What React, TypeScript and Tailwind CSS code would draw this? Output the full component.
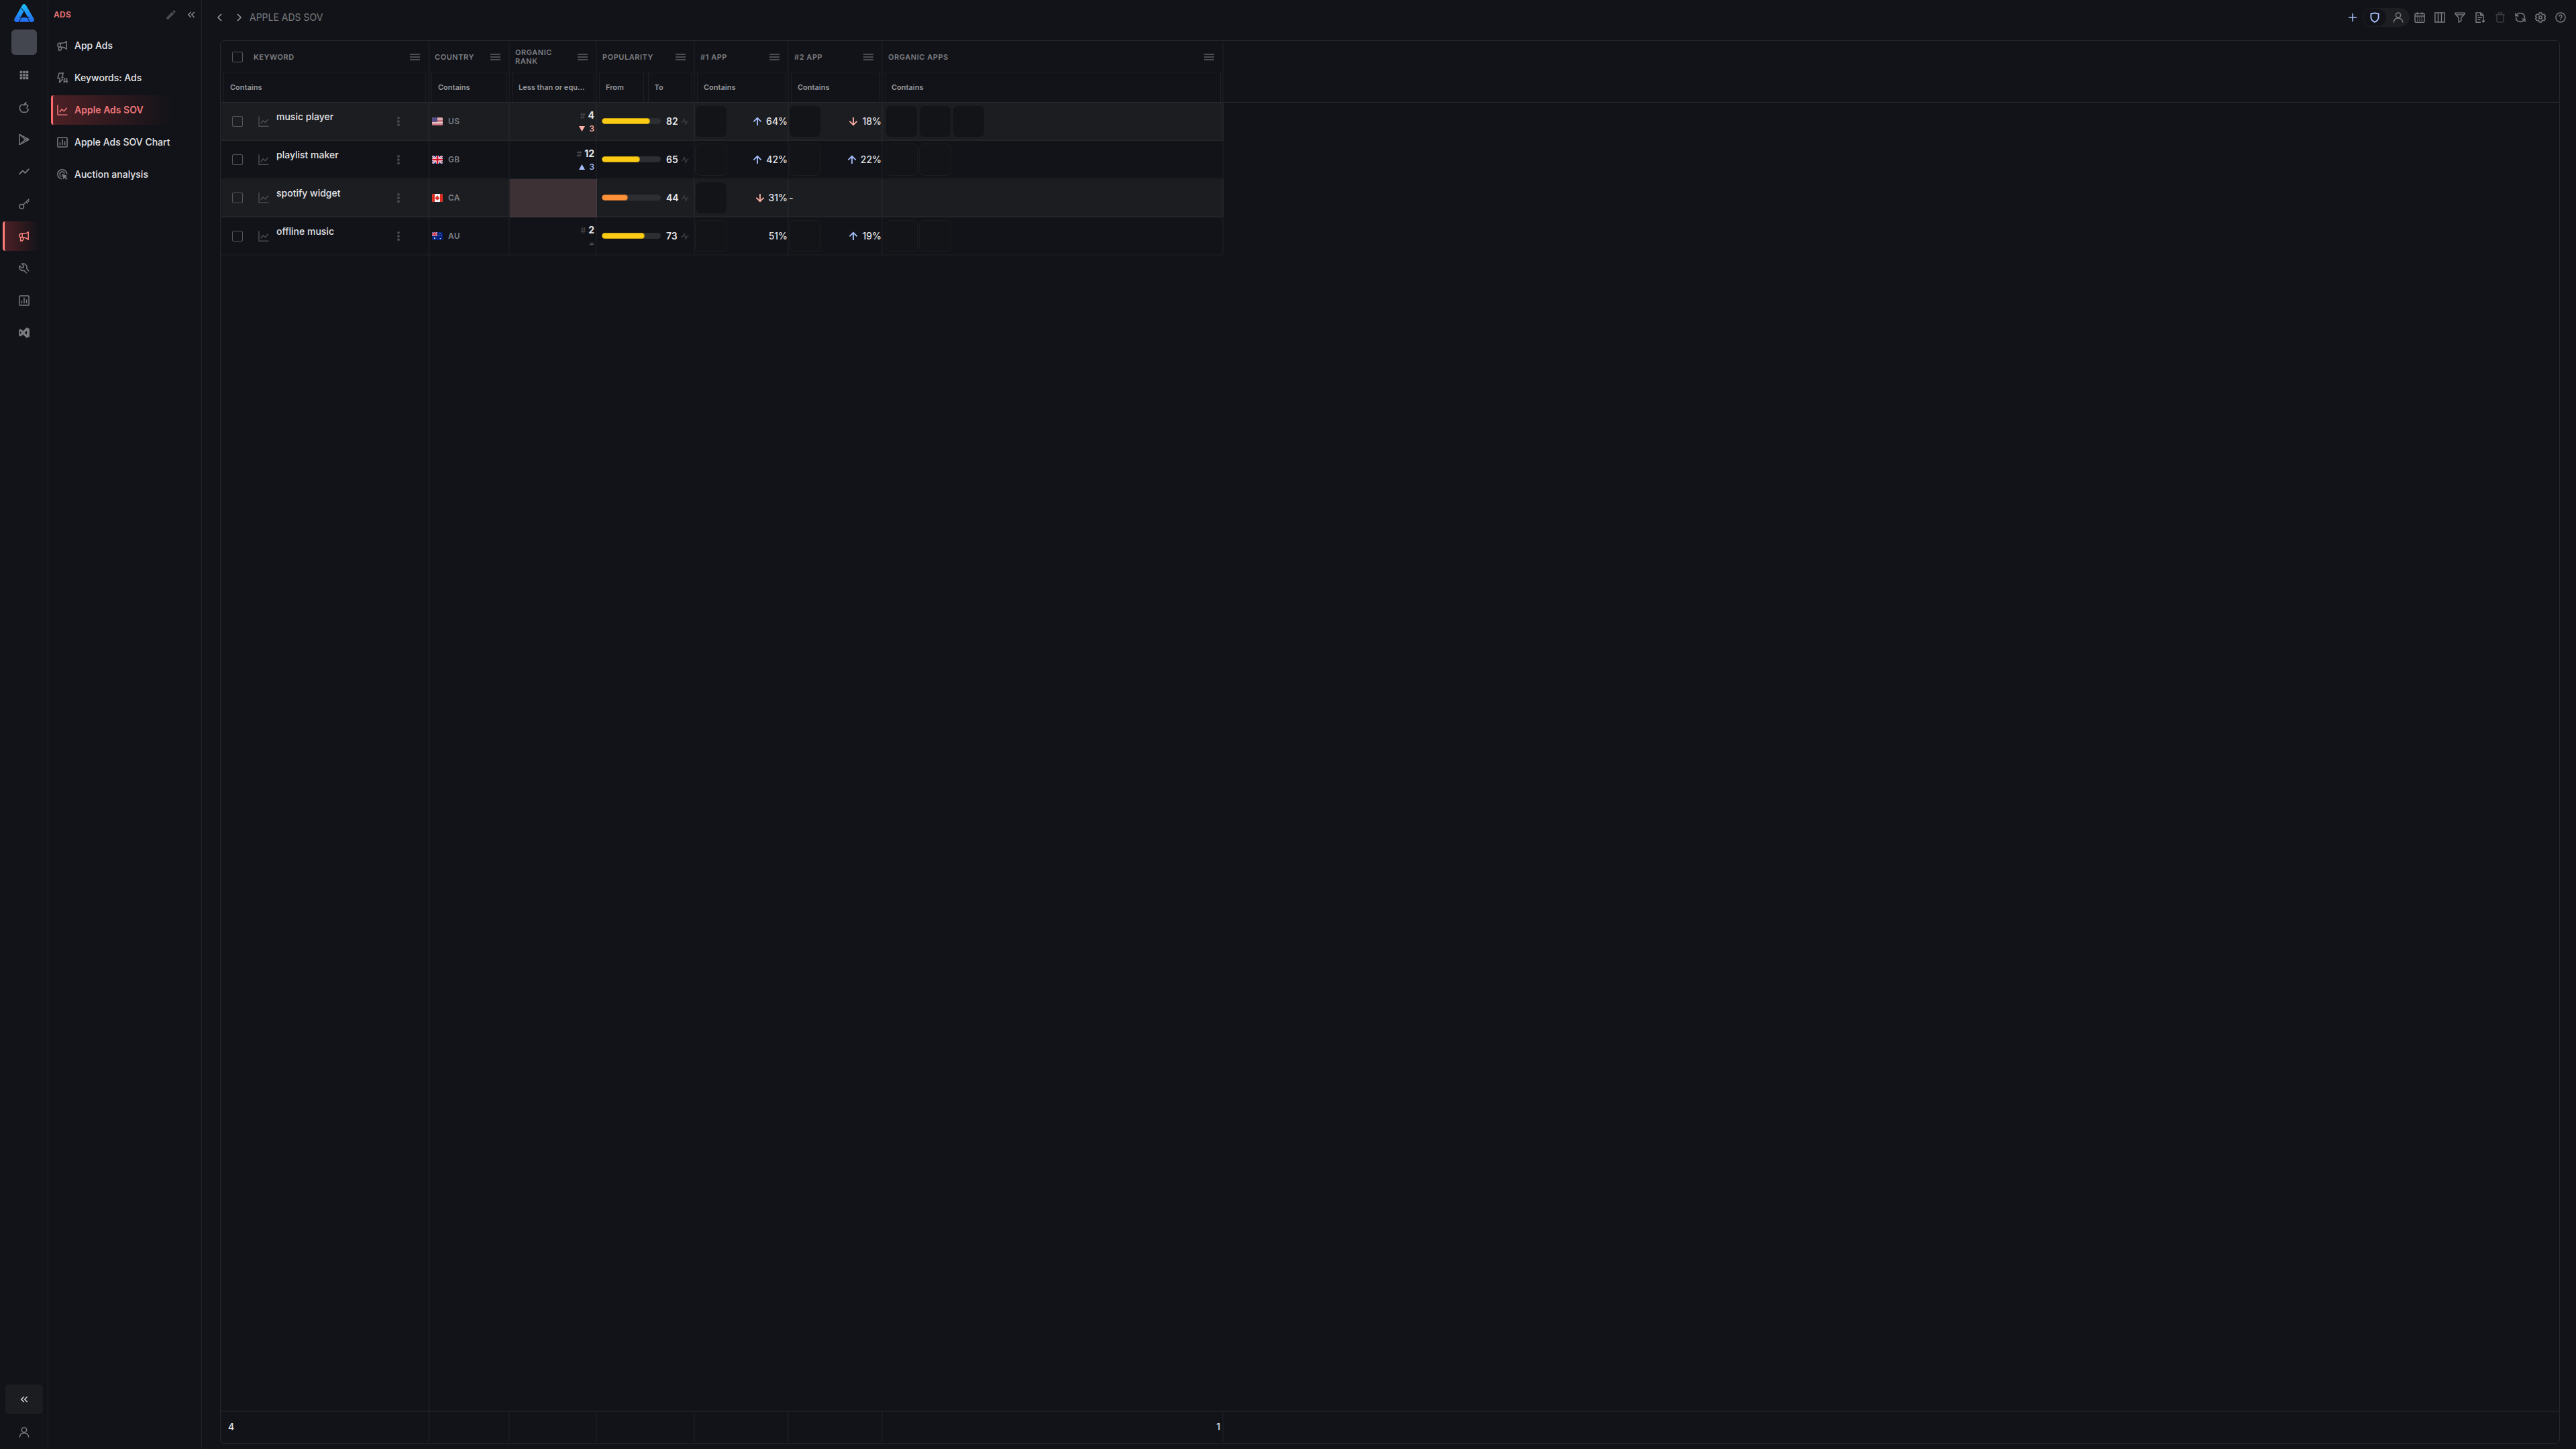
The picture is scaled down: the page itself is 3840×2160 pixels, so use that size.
import type { ReactNode, SVGProps } from "react";
import { MdKeyboardDoubleArrowLeft, MdEdit } from "react-icons/md";

type IconProps = SVGProps<SVGSVGElement>;

function Icon({ children, className = "size-4", ...rest }: IconProps) {
  return (
    <svg
      viewBox="0 0 16 16"
      fill="none"
      stroke="currentColor"
      strokeWidth="1.5"
      strokeLinejoin="round"
      aria-hidden="true"
      className={`shrink-0 ${className}`}
      {...rest}
    >
      {children}
    </svg>
  );
}

const Squares = () => (
  <Icon stroke="none" fill="currentColor">
    <path d="M1.700 1.700h3.600v3.600H1.700zM6.200 1.700h3.600v3.600H6.200zM10.700 1.700h3.600v3.600h-3.600zM1.700 6.200h3.600v3.600H1.700zM6.200 6.200h3.600v3.600H6.200zM10.700 6.200h3.600v3.600h-3.600zM1.700 10.700h3.600v3.600H1.700zM6.200 10.700h3.600v3.600H6.200zM10.700 10.700h3.600v3.600h-3.600z" />
  </Icon>
);

const Megaphone = () => (
  <Icon>
    <path d="M4 4.300h4c2.600 0 4.700-1.200 6.200-2.600v11.600C12.700 11.900 10.600 10.300 8 10.300H4a3 3 0 0 1 0-6z" />
    <path d="M5.200 4.500v5.600M2.600 10v5h2.600l1.200-1.600 1-3" />
  </Icon>
);

const BoltA = () => (
  <Icon>
    <path d="M9.600 7.400H7.200L9.400 1H3.200L1 8.600h3.400L3.600 15l5-5.600" />
    <path d="M10.500 15.800v-4.300a2.200 2.200 0 0 1 4.400 0v4.300M10.500 13.200h4.400" />
  </Icon>
);

const ChartAxes = () => (
  <Icon>
    <path d="M1 0.500v14.700h14.500M3.800 11.200l3.400-4.400 3.200 3 4.300-5" />
  </Icon>
);

const ChartBox = () => (
  <Icon>
    <rect x="0.900" y="0.900" width="14.200" height="14.200" rx="1.200" />
    <path d="M4.400 8.200v4M8 3.800v8.400M11.600 6.600v5.600" />
  </Icon>
);

const TargetCursor = () => (
  <Icon>
    <path d="M7.500 14.800A7 7 0 1 1 14.800 7.500" />
    <path d="M6.600 11.400A3.800 3.800 0 1 1 11.400 6.600" />
    <path d="M7 7l8.800 3.200-3.200 1.400 2.900 3-1.300 1.200-2.900-3L10 16z" fill="currentColor" stroke="none" />
  </Icon>
);

const Apple = () => (
  <Icon>
    <path d="M8 4.800C6.800 4 5.600 3.900 4.400 4.200 2.400 4.700 1.500 6.500 1.500 8.800c0 3.200 1.700 6.400 4 6.400h5.200c1.600 0 2.900-1.600 3.600-3.600-1.500-.7-2.200-1.800-2.200-3.100 0-1.200.6-2.100 1.700-2.900-.9-1.200-2.200-1.600-3.400-1.500C9.400 4.200 8.700 4.500 8 4.800z" />
    <path d="M8 4.600C7.800 2.400 9 .8 11.200.4c0 2-1 3.400-3.200 4.200z" fill="currentColor" strokeWidth="0.800" />
  </Icon>
);

const Play = () => (
  <Icon>
    <path d="M1 .3v15.400L15.200 8z" />
    <path d="M1.400.6l10.200 9.200M1.400 15.400l10.200-9.200M15 8l-4-.2" strokeWidth="1.200" />
  </Icon>
);

const Trend = () => (
  <Icon strokeWidth="1.800">
    <path d="M.7 11.800l5-5.400 3.700 3.400 5.900-6" />
  </Icon>
);

const Key = () => (
  <Icon>
    <circle cx="4.300" cy="11.700" r="3.300" />
    <path d="M6.700 9.300L15.300.7M11 5l2.400 2.400M13.400 2.800l1.900 1.900" />
  </Icon>
);

const Wrench = () => (
  <Icon>
    <path d="M15.300 12.200l-3.500-3.400c.8-2.600.1-5-1.800-6.500C8.400 1 6.400.7 4.500 1.300l3 3-.5 2.400-2.600.6-3-3C.6 6.300 1 8.400 2.400 9.900c1.600 1.600 3.700 2 5.800 1.500l3.600 3.800" />
  </Icon>
);

const Studio = () => (
  <Icon stroke="none" fill="currentColor">
    <path
      fillRule="evenodd"
      d="M11.500.2L16 2v12l-4.500 1.800-5-5.100-3.700 2.900L.2 12.500v-9l2.600-1.100 3.700 2.900zM12 5.300L8.700 8l3.300 2.700zM2 6v4l2.100-2z"
    />
  </Icon>
);

const Person = () => (
  <Icon>
    <circle cx="8" cy="4.600" r="3.700" />
    <path d="M1 15.600C1.700 11.200 4.300 8.900 8 8.900s6.300 2.300 7 6.700" />
  </Icon>
);

const ChevronLeft = () => (
  <Icon strokeLinejoin="miter">
    <path d="M10 3L5 8l5 5" />
  </Icon>
);

const ChevronRight = () => (
  <Icon strokeLinejoin="miter">
    <path d="M6 3l5 5-5 5" />
  </Icon>
);

const Plus = () => (
  <Icon>
    <path d="M8 2v12M2 8h12" />
  </Icon>
);

const Shield = () => (
  <Icon strokeWidth="1.800">
    <path d="M8 1.200c-1.600.9-3.600 1.200-5.600 1.200v5.800c0 2.900 2.200 5 5.600 6.700 3.400-1.700 5.600-3.800 5.600-6.700V2.400c-2 0-4-.3-5.600-1.200z" />
  </Icon>
);

const Calendar = () => (
  <Icon>
    <rect x="1" y="2.200" width="14" height="13" rx="1.200" />
    <path d="M1 6h14M4.500.2v3.600M11.500.2v3.600" />
    <path d="M4 8.800h1.600M7.200 8.800h1.600M10.400 8.800H12M4 12h1.600M7.200 12h1.600M10.400 12H12" />
  </Icon>
);

const Columns = () => (
  <Icon>
    <path d="M.9 1h14.200v14H.9zM5.500 1v14M10.500 1v14" />
  </Icon>
);

const Funnel = () => (
  <Icon>
    <path d="M1 1.200h14v1.600L9.800 8.400V13l-3.600 2.200V8.400L1 2.800zM2.500 4h11" />
  </Icon>
);

const FileDown = () => (
  <Icon>
    <path d="M9 15.200H2V.9h6.800L13 5v4.400M8.800.9V5H13" />
    <path d="M4.500 5.200h2M4.500 8.200h6M4.500 11.200h4" />
    <path d="M13 9.600V15M10.800 12.800L13 15l2.200-2.200" />
  </Icon>
);

const Trash = () => (
  <Icon>
    <path d="M1.200 3.800h13.600M3 3.800V13a2 2 0 0 0 2 2h6a2 2 0 0 0 2-2V3.800M5.500 3.600V1h5v2.600" />
  </Icon>
);

const Refresh = () => (
  <Icon>
    <path d="M2 5.600A6.500 6.500 0 0 1 14.500 8v1M14 10.400A6.500 6.500 0 0 1 1.500 8" />
    <path d="M1 1.200v4.600h4.600M15 14.800v-4.600h-4.600" />
  </Icon>
);

const Gear = () => (
  <Icon>
    <path d="M6.300 1h3.400l.5 2 1.600.9 2-.6 1.600 2.900L13.900 7.600v.8l1.500 1.400-1.600 2.900-2-.6-1.600.9-.5 2H6.300l-.5-2-1.600-.9-2 .6L.6 9.800l1.500-1.400v-.8L.6 6.200l1.600-2.900 2 .6L5.800 3z" />
    <circle cx="8" cy="8" r="2.200" />
  </Icon>
);

const Help = () => (
  <Icon>
    <circle cx="8" cy="8" r="7" />
    <path d="M6 6.600A2 2 0 1 1 8.800 8.200C8.200 8.500 8 8.800 8 9.400M8 10.600v1.500" />
  </Icon>
);

const Pulse = () => (
  <Icon className="size-3" strokeWidth="1.800">
    <path d="M.5 9H4l2.600-6 3.200 11 2.400-6.200h3.300" />
  </Icon>
);

const Menu = () => (
  <svg viewBox="0 0 15 10" fill="currentColor" aria-hidden="true" className="h-2.5 w-[15px]">
    <path d="M0 0h15v2H0zM0 4h15v2H0zM0 8h15v2H0z" />
  </svg>
);

const Dots = () => (
  <svg viewBox="0 0 16 16" fill="currentColor" aria-hidden="true" className="size-4">
    <circle cx="8" cy="2.800" r="1.900" />
    <circle cx="8" cy="8" r="1.900" />
    <circle cx="8" cy="13.200" r="1.900" />
  </svg>
);

const Arrow = ({ up }: { up: boolean }) => (
  <svg
    viewBox="0 0 14 14"
    fill="none"
    stroke="currentColor"
    strokeWidth="1.800"
    aria-hidden="true"
    className={up ? "size-3.5 text-[#a8c1ff]" : "size-3.5 rotate-180 text-[#ffb0a6]"}
  >
    <path d="M7 13V2M1.400 7.400L7 1.800l5.600 5.600" />
  </svg>
);

const Logo = () => (
  <svg viewBox="0 0 30 27" role="img" aria-label="Home" className="h-[27px] w-[30px]">
    <defs>
      <linearGradient id="logo" x1="0" y1="0" x2="0" y2="27" gradientUnits="userSpaceOnUse">
        <stop offset="0" stopColor="#1cc0fb" />
        <stop offset="1" stopColor="#2468f2" />
      </linearGradient>
    </defs>
    <path d="M3.600 23.500L15 3.600l11.400 19.900" fill="none" stroke="url(#logo)" strokeWidth="6.800" strokeLinecap="round" strokeLinejoin="round" />
    <path d="M6 19.800h18l2 7H4z" fill="url(#logo)" />
    <path d="M7 27l4.500-7.200M18.500 19.800h4.500M19.500 19.800L23.500 27M7.500 19.700h14M11 6l3 5" stroke="#121318" strokeWidth="1" fill="none" />
    <path d="M15 11l4.600 8.200h-9.200z" fill="#121318" />
  </svg>
);

const UnionJack = () => (
  <>
    <path d="M0 0h24v18H0z" fill="#0b2a80" />
    <path d="M0 0l24 18M24 0L0 18" stroke="#fff" strokeWidth="4" />
    <path d="M0 0l24 18M24 0L0 18" stroke="#d0142c" strokeWidth="1.400" />
    <path d="M12 0v18M0 9h24" stroke="#fff" strokeWidth="6.400" />
    <path d="M12 0v18M0 9h24" stroke="#d0142c" strokeWidth="4" />
  </>
);

const flags: Record<string, ReactNode> = {
  US: (
    <>
      <path d="M0 0h24v18H0z" fill="#f2eef0" />
      <path d="M0 1.300h24M0 4.100h24M0 6.900h24M0 9.700h24M0 12.500h24M0 15.300h24M0 17.500h24" stroke="#b8434e" strokeWidth="1.400" />
      <path d="M0 0h12v9.700H0z" fill="#45437c" />
      <path d="M1 2h11M1 4.500h11M1 7h11" stroke="#8d8cb4" strokeWidth="0.900" strokeDasharray="1 1.400" />
    </>
  ),
  GB: <UnionJack />,
  CA: (
    <>
      <path d="M0 0h24v18H0z" fill="#f4f2f3" />
      <path d="M0 0h6v18H0zM18 0h6v18h-6z" fill="#d92b20" />
      <path d="M12 3.500l1.300 2.300 1.200-.5-.4 3 2.400-1-.2 1.700.9.700-3.300 2.600.2 1.200-1.900-.3V15h-.6v-1.800l-1.900.3.200-1.200-3.300-2.600.9-.7-.2-1.700 2.400 1-.4-3 1.200.5z" fill="#d92b20" />
    </>
  ),
  AU: (
    <>
      <path d="M0 0h24v18H0z" fill="#04247c" />
      <svg width="12" height="9" viewBox="0 0 24 18">
        <UnionJack />
      </svg>
      <g fill="#fff">
        <circle cx="6" cy="13.500" r="1.500" />
        <circle cx="18" cy="3.200" r="0.800" />
        <circle cx="21.500" cy="7" r="0.800" />
        <circle cx="15.500" cy="8" r="0.800" />
        <circle cx="18.500" cy="14.500" r="1" />
      </g>
    </>
  ),
};

const railItems: { label: string; icon: ReactNode; active?: boolean }[] = [
  { label: "Apps", icon: <Squares /> },
  { label: "App Store", icon: <Apple /> },
  { label: "Google Play", icon: <Play /> },
  { label: "Trends", icon: <Trend /> },
  { label: "Keywords", icon: <Key /> },
  { label: "Ads", icon: <Megaphone />, active: true },
  { label: "Tools", icon: <Wrench /> },
  { label: "Reports", icon: <ChartBox /> },
  { label: "Studio", icon: <Studio /> },
];

const menuItems: { label: string; icon: ReactNode; active?: boolean }[] = [
  { label: "App Ads", icon: <Megaphone /> },
  { label: "Keywords: Ads", icon: <BoltA /> },
  { label: "Apple Ads SOV", icon: <ChartAxes />, active: true },
  { label: "Apple Ads SOV Chart", icon: <ChartBox /> },
  { label: "Auction analysis", icon: <TargetCursor /> },
];

const columns: { label: string; filters: string[] }[] = [
  { label: "Country", filters: ["Contains"] },
  { label: "Organic Rank", filters: ["Less than or equal to"] },
  { label: "Popularity", filters: ["From", "To"] },
  { label: "#1 App", filters: ["Contains"] },
  { label: "#2 App", filters: ["Contains"] },
  { label: "Organic Apps", filters: ["Contains"] },
];

type Share = { value: number; trend?: "up" | "down" };

const rows: {
  keyword: string;
  country: string;
  rank?: number;
  delta?: number;
  popularity: number;
  first?: Share;
  second?: Share;
  organic: number;
}[] = [
  { keyword: "music player", country: "US", rank: 4, delta: -3, popularity: 82, first: { value: 64, trend: "up" }, second: { value: 18, trend: "down" }, organic: 3 },
  { keyword: "playlist maker", country: "GB", rank: 12, delta: 3, popularity: 65, first: { value: 42, trend: "up" }, second: { value: 22, trend: "up" }, organic: 2 },
  { keyword: "spotify widget", country: "CA", popularity: 44, first: { value: 31, trend: "down" }, organic: 0 },
  { keyword: "offline music", country: "AU", rank: 2, delta: 0, popularity: 73, first: { value: 51 }, second: { value: 19, trend: "up" }, organic: 2 },
];

const tools: { label: string; icon: ReactNode; disabled?: boolean }[] = [
  { label: "Calendar", icon: <Calendar /> },
  { label: "Columns", icon: <Columns /> },
  { label: "Filter", icon: <Funnel /> },
  { label: "Export", icon: <FileDown /> },
  { label: "Delete", icon: <Trash />, disabled: true },
  { label: "Refresh", icon: <Refresh /> },
  { label: "Settings", icon: <Gear /> },
  { label: "Help", icon: <Help /> },
];

const Cols = () => (
  <colgroup>
    <col className="w-[310px]" />
    <col className="w-[120px]" />
    <col className="w-[130px]" />
    <col className="w-[146px]" />
    <col className="w-[140px]" />
    <col className="w-[140px]" />
    <col className="w-[508px]" />
    <col />
  </colgroup>
);

const Check = ({ label }: { label: string }) => (
  <input
    type="checkbox"
    aria-label={label}
    className="block size-4 shrink-0 appearance-none rounded-xs border border-[#55565a] bg-transparent"
  />
);

const Tile = () => <div className="size-12 shrink-0 rounded-lg border border-white/4 bg-[#131417]" />;

const Filter = ({ placeholder, label }: { placeholder: string; label: string }) => (
  <input
    type="text"
    aria-label={label}
    placeholder={placeholder}
    className="block h-11 w-full min-w-0 border-x border-white/5 bg-transparent pr-3 pl-[9px] text-[11px] font-semibold text-ellipsis outline-none placeholder:text-[#97989c]"
  />
);

const ShareCell = ({ share }: { share?: Share }) => (
  <td className="border-r-2 border-b-2 border-white/3 p-0">
    {share ? (
      <div className="flex items-center">
        <Tile />
        <div className="ml-auto flex items-center gap-1.5">
          {share.trend && <Arrow up={share.trend === "up"} />}
          <span>{share.value}%</span>
        </div>
      </div>
    ) : (
      "-"
    )}
  </td>
);

const Delta = ({ value }: { value: number }) => {
  if (value === 0) return <div className="text-xs leading-5 text-[#55565a]">=</div>;
  const up = value > 0;
  return (
    <div className={`flex items-center justify-end gap-1.5 text-xs leading-5 ${up ? "text-[#a8c1ff]" : "text-[#ffb0a6]"}`}>
      <svg viewBox="0 0 9 8" fill="currentColor" aria-hidden="true" className={up ? "h-2 w-[9px]" : "h-2 w-[9px] rotate-180"}>
        <path d="M4.500 0L9 8H0z" />
      </svg>
      <span>{Math.abs(value)}</span>
    </div>
  );
};

export default function App() {
  return (
    <div className="flex h-screen bg-[#121318] font-[Inter,sans-serif] text-sm font-medium text-[#e3e3e6]">
      <nav aria-label="Main" className="flex w-[72px] shrink-0 flex-col items-center border-r border-[#222327] text-[#7a7b7f]">
        <a href="#home" className="mt-1.5">
          <Logo />
        </a>
        <button aria-label="Account" className="mt-[11px] size-[38px] rounded-md bg-[#44464f]" />
        <div className="mt-2 flex w-full flex-col gap-1">
          {railItems.map((item) => (
            <a
              key={item.label}
              href={`#${item.label}`}
              aria-label={item.label}
              className={
                item.active
                  ? "ml-1 flex h-11 items-center justify-center rounded-sm border-l-3 border-[#ff7f7b] bg-linear-to-r from-[#4c2025] to-transparent to-80% pr-[7px] text-[#ff8580]"
                  : "flex h-11 items-center justify-center"
              }
            >
              {item.icon}
            </a>
          ))}
        </div>
        <button aria-label="Collapse" className="mt-auto flex h-11 w-14 items-center justify-center rounded-md bg-[#1c1d20] text-[#d5d6d9]">
          <MdKeyboardDoubleArrowLeft className="size-[18px]" />
        </button>
        <button aria-label="Profile" className="mt-[5px] mb-[3px] flex h-11 w-14 items-center justify-center">
          <Person />
        </button>
      </nav>

      <aside className="w-[229px] shrink-0 border-r border-[#222327]">
        <header className="flex h-11 items-center pl-2">
          <h2 className="text-xs font-semibold tracking-wide text-[#f2777a]">ADS</h2>
          <button aria-label="Edit" className="ml-auto flex size-[30px] items-center justify-center text-[#4b4c50]">
            <MdEdit className="size-[18px]" />
          </button>
          <button aria-label="Hide menu" className="flex size-[30px] items-center justify-center text-[#8a8b8f]">
            <MdKeyboardDoubleArrowLeft className="size-[18px]" />
          </button>
        </header>
        <ul className="mt-0.5 flex flex-col gap-1 pl-1">
          {menuItems.map((item) => (
            <li key={item.label}>
              <a
                href={`#${item.label}`}
                className={
                  item.active
                    ? "flex h-11 items-center gap-2.5 rounded-sm border-l-3 border-[#ff6b6f] bg-linear-to-r from-[#4c2025] to-transparent to-80% pl-1.5 font-semibold text-[#f2777a]"
                    : "flex h-11 items-center gap-2.5 pl-[9px]"
                }
              >
                <span className={item.active ? "" : "text-[#7a7b7f]"}>{item.icon}</span>
                {item.label}
              </a>
            </li>
          ))}
        </ul>
      </aside>

      <main className="flex min-w-0 flex-1 flex-col pr-6 pb-2 pl-[27px]">
        <header className="flex h-[60px] shrink-0 items-start pt-3 text-[#7a7b7f]">
          <div className="-ml-2 flex h-7 items-center">
            <button aria-label="Back" className="mr-3 text-[#9c9da0]">
              <ChevronLeft />
            </button>
            <span className="mr-2 text-[#9c9da0]">
              <ChevronRight />
            </span>
            <h1 className="font-normal">APPLE ADS SOV</h1>
          </div>
          <div className="-mr-4 ml-auto flex h-7 items-center">
            <button aria-label="Add" className="flex size-[30px] items-center justify-center text-[#a8c1ff]">
              <Plus />
            </button>
            <div className="flex h-7 w-[70px] rounded-full bg-[#1d1e21]">
              <button aria-label="Protected" className="flex w-9 items-center justify-center rounded-full border border-[#1d1e21] bg-[#121318] text-[#a8c1ff]">
                <Shield />
              </button>
              <button aria-label="User" className="flex flex-1 items-center justify-center">
                <Person />
              </button>
            </div>
            {tools.map((tool) => (
              <button
                key={tool.label}
                aria-label={tool.label}
                disabled={tool.disabled}
                className="flex size-[30px] items-center justify-center disabled:text-[#3b3c40]"
              >
                {tool.icon}
              </button>
            ))}
          </div>
        </header>

        <section className="flex min-h-0 flex-1 flex-col rounded-md border border-[#25272b] p-px">
          <table className="w-full table-fixed border-separate border-spacing-0 text-left">
            <Cols />
            <thead className="text-[#7e7f83]">
              <tr className="h-[46px] text-[11px] leading-[13px] uppercase">
                <th className="border-r border-b border-r-[#2a2b2f] border-b-white/3 p-0 pt-px pr-[13px] pl-4 font-semibold tracking-wider">
                  <div className="flex items-center gap-4">
                    <Check label="Select all" />
                    Keyword
                    <button aria-label="Keyword menu" className="ml-auto text-[#4b4c50]">
                      <Menu />
                    </button>
                  </div>
                </th>
                {columns.map((c) => (
                  <th key={c.label} className="border-r-2 border-b border-white/3 p-0 pt-px pr-3 pl-2 font-semibold tracking-wider">
                    <div className="flex items-center justify-between gap-2">
                      {c.label}
                      <button aria-label={`${c.label} menu`} className="text-[#4b4c50]">
                        <Menu />
                      </button>
                    </div>
                  </th>
                ))}
                <td />
              </tr>
              <tr className="h-[45px] [&>td]:border-b [&>td]:border-b-[#2a2b2f]">
                <td className="border-r border-[#2a2b2f] p-0 pr-1 pl-[3px]">
                  <Filter placeholder="Contains" label="Keyword contains" />
                </td>
                {columns.map((c) => (
                  <td key={c.label} className="border-r-2 border-white/3 p-0 pr-0.5 pl-[3px]">
                    <div className="flex gap-1.5">
                      {c.filters.map((f) => (
                        <Filter key={f} placeholder={f} label={`${c.label} ${f}`} />
                      ))}
                    </div>
                  </td>
                ))}
                <td />
              </tr>
            </thead>
            <tbody className="[&>tr:nth-child(odd)>td:not(:last-child)]:bg-[#1c1d21]">
              {rows.map((row) => (
                <tr key={row.keyword} className="h-[57px]">
                  <td className="border-r border-b-2 border-r-[#2a2b2f] border-b-white/3 p-0 pr-[37px] pl-4">
                    <div className="flex items-center">
                      <Check label={`Select ${row.keyword}`} />
                      <button aria-label={`${row.keyword} chart`} className="ml-[23px] text-[#4b4c50]">
                        <ChartAxes />
                      </button>
                      <span className="ml-[11px] pb-3.5">{row.keyword}</span>
                      <button aria-label={`${row.keyword} actions`} className="ml-auto text-[#4b4c50]">
                        <Dots />
                      </button>
                    </div>
                  </td>
                  <td className="border-r-2 border-b-2 border-white/3 p-0 pl-1">
                    <div className="flex items-center gap-2 text-xs font-semibold tracking-wide text-[#7e7f83]">
                      <svg viewBox="0 0 24 18" role="img" aria-label={row.country} className="h-3 w-4 rounded-xs">
                        {flags[row.country]}
                      </svg>
                      {row.country}
                    </div>
                  </td>
                  {row.rank === undefined ? (
                    <td className="border-r-2 border-b-2 border-white/3 bg-[#3d3135]! p-0" />
                  ) : (
                    <td className="border-r-2 border-b-2 border-white/3 p-0 pt-0.5 pr-0.5 text-right">
                      <div className="leading-5 font-bold">
                        <span className="mr-1 text-xs font-medium text-[#4b4c50]">#</span>
                        {row.rank}
                      </div>
                      <Delta value={row.delta ?? 0} />
                    </td>
                  )}
                  <td className="border-r-2 border-b-2 border-white/3 p-0 pl-[7px]">
                    <div className="flex items-center">
                      <div className="h-[9px] w-[88px] overflow-hidden rounded-full bg-[#2d2e32]">
                        <div
                          className={row.popularity < 50 ? "h-full rounded-full border border-black/25 bg-[#ff9138]" : "h-full rounded-full border border-black/25 bg-[#fccc14]"}
                          style={{ width: `${row.popularity}%` }}
                        />
                      </div>
                      <span className="ml-2 w-[22px] font-semibold">{row.popularity}</span>
                      <span className="text-[#3b3c40]">
                        <Pulse />
                      </span>
                    </div>
                  </td>
                  <ShareCell share={row.first} />
                  <ShareCell share={row.second} />
                  <td className="border-r-2 border-b-2 border-white/3 p-0 pl-1">
                    <div className="flex gap-0.5">
                      {Array.from({ length: row.organic }, (_, i) => (
                        <Tile key={i} />
                      ))}
                    </div>
                  </td>
                  <td />
                </tr>
              ))}
            </tbody>
          </table>
          <div className="w-[310px] flex-1 border-r border-[#2a2b2f]" />
          <table className="w-full table-fixed border-separate border-spacing-0 border-t border-[#2a2b2f] text-left">
            <Cols />
            <tbody>
              <tr className="h-[46px]">
                <td className="border-r border-[#2a2b2f] p-0 pl-2.5">{rows.length}</td>
                {columns.map((c, i) => (
                  <td key={c.label} className="border-r-2 border-white/3 p-0 pr-[3px] text-right">
                    {i === columns.length - 1 ? 1 : ""}
                  </td>
                ))}
                <td />
              </tr>
            </tbody>
          </table>
        </section>
      </main>
    </div>
  );
}
